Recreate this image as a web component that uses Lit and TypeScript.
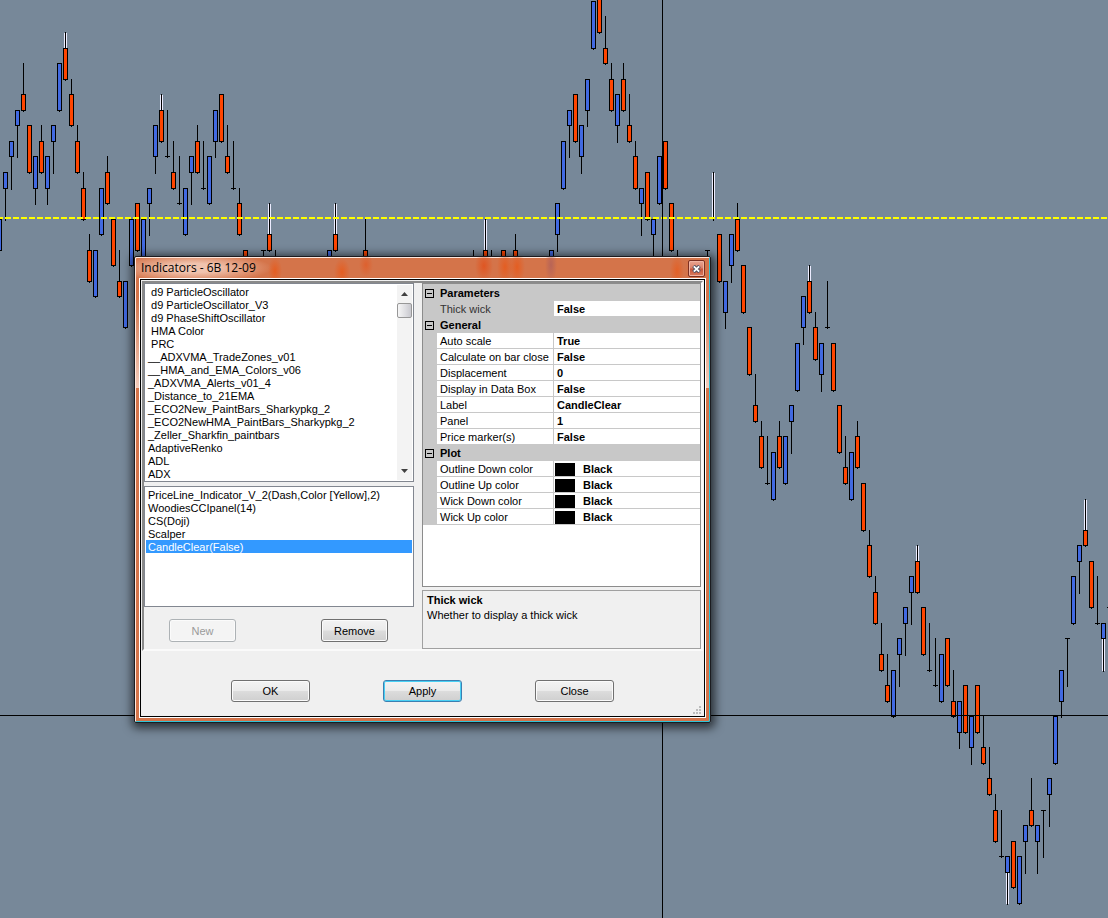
import { LitElement, html, svg, css } from "lit";
import { customElement, state } from "lit/decorators.js";
import { classMap } from "lit/directives/class-map.js";

type Bar = {
  slot: number;
  kind: "up" | "down" | "doji" | "wick";
  high: number;
  top: number;
  bottom: number;
  low: number;
  clear?: "high" | "low";
};

/* slot kind high top bottom low [h|l = highlighted wick]; prices are ticks from the price line */
const SERIES = `
-1 u 0 0 -2 -2|0 u 3 3 2 0|1 u 5 5 4 2|2 u 7 7 6 4|3 d 10 8 7 7|4 d 6 6 3 3|5 u 4 4 2 1|6 d 6 5 3 3|7 u 4 4 2 1
8 u 6 6 5 3|9 u 10 10 7 7|10 d 12 11 9 9 h|11 d 9 8 6 6|12 d 6 5 3 3|13 d 3 2 0 0|14 d -1 -2 -4 -4|15 u -2 -2 -5 -5
16 u 2 2 -1 -1|17 d 4 3 1 1|18 d 0 0 -3 -3|19 d -2 -4 -5 -5|20 u -4 -4 -7 -7|21 u 0 0 -3 -3|22 d 1 1 -2 -2
23 u 0 0 -3 -3|24 u 2 2 1 -1|25 u 6 6 4 3|26 d 8 7 5 5 h|27 x 7 4 4 4|28 d 5 3 2 2|29 x 4 1 1 1|30 u 2 2 -1 -1
31 u 4 4 3 1|32 d 6 5 3 3|33 x 5 2 2 2|34 u 4 4 1 1|35 u 7 7 5 4|36 d 8 8 5 5|37 d 6 4 3 3|38 x 5 2 2 2|39 d 2 1 -1 -1
40 d -2 -2 -3 -3|43 x -2 -2 -2 -3|44 d 1 -1 -2 -2 h|45 w -2 -2 -3 -3|54 u -2 -2 -3 -3|55 d 1 -1 -2 -2 h|60 d 0 -2 -3 -3
78 w -2 -2 -3 -3|80 d 0 -2 -3 -3 h|81 w -2 -2 -3 -3|83 d -2 -2 -3 -3|85 d -1 -2 -3 -3|91 u -2 -2 -3 -3|92 u 1 1 -1 -2
93 u 5 5 2 2|94 u 7 7 6 4|95 d 8 8 5 5|96 u 6 6 4 3|97 u 9 9 7 6|98 u 14 14 11 11|99 d 15 15 12 12|100 d 13 11 10 10
101 d 10 9 7 7|102 u 8 8 6 5|103 d 10 9 7 7|104 d 8 6 5 5|105 d 5 4 2 2|106 u 2 2 1 -1|107 d 3 3 0 0|108 u 0 0 -1 -3
109 u 4 4 1 1|110 d 5 5 2 2|111 d 1 1 -2 -2|112 w -2 -2 -3 -3|117 x -2 -2 -2 -3|118 w 3 3 0 0 h|119 d -1 -1 -4 -4
120 u -4 -4 -6 -7|121 u -1 -1 -3 -4|122 d 1 0 -2 -2|123 d -3 -3 -6 -6|124 d -7 -7 -10 -10|125 d -10 -12 -13 -13
126 d -13 -14 -16 -16|127 x -14 -17 -17 -17|128 u -15 -15 -18 -18|129 d -13 -14 -16 -16|130 u -14 -14 -17 -17
131 u -12 -12 -13 -15|132 u -8 -8 -11 -11|133 u -5 -5 -7 -8|134 d -3 -4 -6 -6 h|135 d -6 -7 -9 -9|136 u -8 -8 -10 -11
137 x -4 -7 -7 -7|138 d -8 -8 -11 -11|139 d -12 -12 -15 -15|140 d -14 -16 -17 -17|141 u -15 -15 -18 -18
142 d -13 -14 -16 -16|143 d -17 -17 -20 -20|144 d -20 -21 -23 -23|145 d -23 -24 -26 -26|146 d -26 -28 -29 -29
147 d -28 -30 -31 -31|148 u -29 -29 -32 -32|149 u -27 -27 -28 -30|150 u -25 -25 -26 -28|151 u -23 -23 -24 -26
152 d -21 -22 -24 -24 h|153 d -25 -25 -28 -28|154 x -26 -29 -29 -29|155 x -27 -30 -30 -30|156 u -28 -28 -31 -31
157 d -27 -27 -30 -30|158 d -29 -31 -32 -32|159 u -31 -31 -33 -34|160 d -30 -30 -33 -33|161 u -32 -32 -34 -35
162 d -30 -30 -33 -33|163 d -32 -34 -35 -35|164 d -34 -36 -37 -37|165 d -37 -38 -40 -40|166 x -38 -41 -41 -41
167 u -41 -41 -42 -44 l|168 d -40 -40 -43 -43|169 u -41 -41 -44 -44|170 u -39 -39 -40 -42|171 d -36 -38 -39 -39
172 u -39 -39 -40 -42|173 x -38 -38 -38 -41|174 u -36 -36 -37 -39|175 u -32 -32 -35 -35|176 u -29 -29 -31 -32
177 x -27 -27 -27 -30|178 u -23 -23 -26 -26|179 u -21 -21 -22 -24|180 d -18 -20 -21 -21 h|181 d -22 -22 -25 -25
182 x -23 -26 -26 -26|183 u -26 -26 -27 -29 l|184 x -25 -25 -25 -25`;

const KINDS: Record<string, Bar["kind"]> = { u: "up", d: "down", x: "doji", w: "wick" };

const BARS: Bar[] = SERIES.trim()
  .split(/[|\n]/)
  .map((row) => {
    const [slot, kind, high, top, bottom, low, mark] = row.trim().split(" ");
    return {
      slot: Number(slot),
      kind: KINDS[kind],
      high: Number(high),
      top: Number(top),
      bottom: Number(bottom),
      low: Number(low),
      clear: mark === "h" ? "high" : mark === "l" ? "low" : undefined,
    };
  });

const TICK = 15.55;
const yOf = (price: number) => Math.round(218.6 - TICK * price);

@customElement("price-chart")
export class PriceChart extends LitElement {
  static styles = css`
    :host { display: block; background: #778899; }
    .plot { display: block; width: 100%; height: 100%; shape-rendering: crispEdges; }
    .ink { fill: #000; }
    .glow { fill: #ececff; }
    .up { fill: #4169e1; }
    .down { fill: #ff4500; }
    .price { stroke: #ffff00; stroke-width: 2; stroke-dasharray: 6 2; }
    .cross { stroke: #000; stroke-width: 1; }
  `;

  private bar(b: Bar) {
    const x = 5 + 6 * b.slot;
    const high = yOf(b.high);
    const low = yOf(b.low) + 2;
    const top = yOf(b.top);
    const bottom = yOf(b.bottom);
    const glowTop = b.clear === "high" ? high + 1 : bottom;
    const glowEnd = b.clear === "high" ? (b.kind === "wick" ? bottom : top) : low - 1;
    return svg`
      ${b.clear ? svg`<rect class="glow" x=${x - 1} y=${glowTop} width="3" height=${glowEnd - glowTop}></rect>` : null}
      <rect class="ink" x=${x} y=${high} width="1" height=${low - high}></rect>
      ${b.kind === "doji" ? svg`<rect class="ink" x=${x - 2} y=${top} width="5" height="1"></rect>` : null}
      ${b.kind === "up" || b.kind === "down"
        ? svg`<rect class="ink" x=${x - 2} y=${top} width="5" height=${bottom - top + 1}></rect>
            <rect class=${b.kind} x=${x - 1} y=${top + 1} width="3" height=${bottom - top - 1}></rect>`
        : null}`;
  }

  render() {
    return html`<svg class="plot" role="img" aria-label="Price chart">
      ${BARS.map((b) => this.bar(b))}
      <line class="price" x1="0" x2="100%" y1="218" y2="218" stroke-dashoffset="3"></line>
      <line class="cross" x1="662.5" x2="662.5" y1="0" y2="100%"></line>
      <line class="cross" x1="0" x2="100%" y1="715.5" y2="715.5"></line>
    </svg>`;
  }
}

const AVAILABLE = [
  "\u00a0d9 ParticleOscillator",
  "\u00a0d9 ParticleOscillator_V3",
  "\u00a0d9 PhaseShiftOscillator",
  "\u00a0HMA Color",
  "\u00a0PRC",
  "__ADXVMA_TradeZones_v01",
  "__HMA_and_EMA_Colors_v06",
  "_ADXVMA_Alerts_v01_4",
  "_Distance_to_21EMA",
  "_ECO2New_PaintBars_Sharkypkg_2",
  "_ECO2NewHMA_PaintBars_Sharkypkg_2",
  "_Zeller_Sharkfin_paintbars",
  "AdaptiveRenko",
  "ADL",
  "ADX",
];

const ACTIVE = [
  "PriceLine_Indicator_V_2(Dash,Color [Yellow],2)",
  "WoodiesCCIpanel(14)",
  "CS(Doji)",
  "Scalper",
  "CandleClear(False)",
];

type Prop = { name: string; value: string; swatch?: boolean };

const GROUPS: { title: string; props: Prop[] }[] = [
  { title: "Parameters", props: [{ name: "Thick wick", value: "False" }] },
  {
    title: "General",
    props: [
      { name: "Auto scale", value: "True" },
      { name: "Calculate on bar close", value: "False" },
      { name: "Displacement", value: "0" },
      { name: "Display in Data Box", value: "False" },
      { name: "Label", value: "CandleClear" },
      { name: "Panel", value: "1" },
      { name: "Price marker(s)", value: "False" },
    ],
  },
  {
    title: "Plot",
    props: [
      { name: "Outline Down color", value: "Black", swatch: true },
      { name: "Outline Up color", value: "Black", swatch: true },
      { name: "Wick Down color", value: "Black", swatch: true },
      { name: "Wick Up color", value: "Black", swatch: true },
    ],
  },
];

@customElement("property-grid")
export class PropertyGrid extends LitElement {
  static styles = css`
    :host { display: block; background: #fff; border: 1px solid #8c8c8c; box-sizing: border-box; overflow: hidden; }
    table { width: 100%; border-collapse: separate; border-spacing: 0; table-layout: fixed; border-top: 1px solid #c8c8c8; }
    .c-gutter { width: 14px; }
    .c-name { width: 117px; }
    th, td { box-sizing: border-box; height: 16px; padding: 0 0 0 3px; line-height: 15px; text-align: left; white-space: nowrap; overflow: hidden; }
    .gutter { background: #c8c8c8; padding: 0; }
    .group { background: #c8c8c8; font-weight: bold; }
    .name, .value { padding-top: 1px; }
    .name { font-weight: normal; box-shadow: inset -1px -1px 0 #c8c8c8; }
    .value { font-weight: bold; box-shadow: inset 0 -1px 0 #c8c8c8; }
    .current .name { background: #c8c8c8; color: #333; }
    .cell { display: flex; align-items: center; gap: 8px; }
    .swatched { padding: 0 0 0 1px; }
    .swatched .label { padding-top: 1px; }
    .swatch { width: 20px; height: 13px; background: #000; }
    .toggle { display: block; width: 14px; height: 15px; margin: 0; padding: 0 0 0 2px; border: 0; background: none; }
    .toggle svg { display: block; shape-rendering: crispEdges; }
  `;

  @state() private closed: string[] = [];

  private flip(title: string) {
    this.closed = this.closed.includes(title)
      ? this.closed.filter((t) => t !== title)
      : [...this.closed, title];
  }

  render() {
    return html`<table>
      <colgroup><col class="c-gutter" /><col class="c-name" /><col /></colgroup>
      ${GROUPS.map((g) => {
        const shut = this.closed.includes(g.title);
        return html`<tbody>
          <tr>
            <td class="gutter">
              <button class="toggle" aria-label=${"Toggle " + g.title} @click=${() => this.flip(g.title)}>
                <svg width="9" height="9" viewBox="0 0 9 9" fill="none" stroke="#000">
                  <path d=${shut ? "M.5 .5H8.5V8.5H.5ZM2 4.5H7M4.5 2V7" : "M.5 .5H8.5V8.5H.5ZM2 4.5H7"} />
                </svg>
              </button>
            </td>
            <th class="group" colspan="2" scope="colgroup">${g.title}</th>
          </tr>
          ${shut
            ? null
            : g.props.map(
                (p) => html`<tr class=${classMap({ current: p.name === "Thick wick" })}>
                  <td class="gutter"></td>
                  <th class="name" scope="row">${p.name}</th>
                  <td class=${classMap({ value: true, swatched: !!p.swatch })}>
                    <div class="cell">${p.swatch ? html`<span class="swatch"></span>` : null}<span class="label">${p.value}</span></div>
                  </td>
                </tr>`
              )}
        </tbody>`;
      })}
    </table>`;
  }
}

@customElement("indicators-dialog")
export class IndicatorsDialog extends LitElement {
  static styles = css`
    :host {
      display: flex; flex-direction: column; box-sizing: border-box; width: 577px;
      padding: 0 4px 4px; border: 1px solid #1c1c20; border-radius: 2px;
      color: #000; font: 11px "Liberation Sans", Arial, sans-serif;
      background:
        linear-gradient(#d4744a 0, #d4744a 40px, #f3cdbd 131px, #d4744a 131px);
      box-shadow: inset 1px 1px 0 #ffe9df, inset -1px -1px 0 #2fc4d8, 1px 2px 10px 3px rgba(0, 0, 0, 0.65);
    }
    .title { display: flex; align-items: flex-start; justify-content: space-between; height: 21px; margin: 0 -3px;
      background:
        radial-gradient(ellipse 78px 15px at 58px 11px, rgba(250, 222, 208, 0.75) 30%, rgba(250, 222, 208, 0) 100%),
        radial-gradient(ellipse 7px 14px at 139px 14px, rgba(232, 88, 24, 0.8), rgba(232, 88, 24, 0)),
        radial-gradient(ellipse 8px 14px at 206px 15px, rgba(232, 88, 24, 0.8), rgba(232, 88, 24, 0)),
        radial-gradient(ellipse 7px 12px at 230px 8px, rgba(226, 88, 34, 0.7), rgba(226, 88, 34, 0)),
        radial-gradient(ellipse 9px 16px at 348px 9px, rgba(226, 78, 24, 0.8), rgba(226, 78, 24, 0)),
        radial-gradient(ellipse 8px 18px at 369px 10px, rgba(232, 88, 24, 0.8), rgba(232, 88, 24, 0)),
        radial-gradient(ellipse 8px 18px at 381px 10px, rgba(232, 88, 24, 0.8), rgba(232, 88, 24, 0)),
        radial-gradient(ellipse 6px 18px at 415px 8px, rgba(176, 96, 90, 0.8), rgba(176, 96, 90, 0)),
        radial-gradient(ellipse 7px 16px at 541px 14px, rgba(232, 88, 24, 0.7), rgba(232, 88, 24, 0)); }
    h1 { margin: 0; padding-left: 5px; font: 12px/21px "Open Sans", "Noto Sans", sans-serif; }
    .x { display: grid; place-items: center; width: 17px; height: 17px; margin: 3px 4px 0 0; padding: 0; border: 1px solid #7c3022;
      border-radius: 2px; box-shadow: inset 0 0 0 1px #f0b3a2; background: linear-gradient(#e8a592, #dc8068 48%, #c4543a 52%, #dc7c5e); }
    .client { border: 1px solid #fff; }
    .inner { display: flex; flex-direction: column; border: 1px solid #000; padding: 1px 1px 0; background: #f0f0f0; }
    .panel { display: flex; gap: 8px; border: 2px solid; border-color: #8a8a8a #fafafa #fafafa #8a8a8a; }
    .left { display: flex; flex-direction: column; width: 270px; }
    .box { display: flex; box-sizing: border-box; border: 1px solid #828790; padding: 1px; background: #fff; }
    .all { height: 199px; }
    .used { height: 121px; margin-top: 4px; }
    select { flex: 1; min-width: 0; margin: 0; padding: 0; border: 0; border-radius: 0; outline: 0; overflow: hidden;
      background: #fff; color: #000; font: inherit; }
    option { box-sizing: border-box; height: 13px; min-height: 13px; padding: 1px 2px 0; font: 11px/13px "Liberation Sans", Arial, sans-serif; }
    .used option:checked { background: linear-gradient(#3399ff, #3399ff); color: #fff; -webkit-text-fill-color: #fff; }
    .bar { display: flex; flex-direction: column; width: 15px; background: #f3f3f3; }
    .bar button { display: grid; place-items: center; width: 15px; height: 18px; padding: 0; border: 0; background: none; }
    .bar .thumb { height: 15px; border: 1px solid #979797; border-radius: 2px; background: linear-gradient(90deg, #f6f6f6, #dcdce0 60%, #c8c8ce); }
    .room { flex: 1; }
    .pair { display: flex; justify-content: space-between; padding: 12px 26px 0 25px; }
    .btn { box-sizing: border-box; width: 79px; height: 22px; padding: 0; border: 1px solid #707070; border-radius: 3px; color: #000; font: inherit;
      box-shadow: inset 0 0 0 1px #fbfbfb; background: linear-gradient(#f3f3f3, #ebebeb 48%, #dcdcdc 52%, #cfcfcf); }
    .pair .btn { width: 67px; height: 23px; }
    .btn:disabled { border-color: #adb2b5; color: #9a9a9a; background: #f4f4f4; }
    .btn.default { border-color: #3c7fb1; box-shadow: inset 0 0 0 1px #48d0f4; }
    .right { display: flex; flex-direction: column; gap: 3px; flex: 1; min-width: 0; }
    property-grid { height: 304px; }
    .help { box-sizing: border-box; height: 59px; padding: 2px 4px; border: 1px solid #a0a0a0; line-height: 15px; }
    .help h2, .help p { margin: 0; font-size: 11px; }
    .footer { display: flex; align-items: flex-start; gap: 73px; height: 65px; box-sizing: border-box; padding: 29px 0 0 89px; }
    .grip { align-self: flex-end; margin: 0 2px 2px auto; shape-rendering: crispEdges; }
  `;

  render() {
    return html`
      <header class="title">
        <h1>Indicators - 6B 12-09</h1>
        <button class="x" aria-label="Close window">
          <svg width="9" height="8" viewBox="0 0 9 8" fill="none">
            <path d="M1.5 1L7.5 7M7.5 1L1.5 7" stroke="#4a4e60" stroke-width="3.6" />
            <path d="M1.8 1.3L7.2 6.7M7.2 1.3L1.8 6.7" stroke="#fff" stroke-width="1.8" />
          </svg>
        </button>
      </header>
      <div class="client"><div class="inner">
        <div class="panel">
          <div class="left">
            <div class="box all">
              <select size="15" aria-label="Available indicators">
                ${AVAILABLE.map((n) => html`<option>${n}</option>`)}
              </select>
              <div class="bar">
                <button aria-label="Scroll up"><svg width="7" height="4" viewBox="0 0 7 4"><path d="M3.5 0L7 4H0Z" fill="#404040" /></svg></button>
                <button class="thumb" aria-label="Scroll position"></button>
                <span class="room"></span>
                <button aria-label="Scroll down"><svg width="7" height="4" viewBox="0 0 7 4"><path d="M0 0H7L3.5 4Z" fill="#404040" /></svg></button>
              </div>
            </div>
            <div class="box used">
              <select size="9" aria-label="Active indicators">
                ${ACTIVE.map((n, i) => html`<option ?selected=${i === 4}>${n}</option>`)}
              </select>
            </div>
            <div class="pair">
              <button class="btn" disabled>New</button>
              <button class="btn">Remove</button>
            </div>
          </div>
          <div class="right">
            <property-grid></property-grid>
            <section class="help"><h2>Thick wick</h2><p>Whether to display a thick wick</p></section>
          </div>
        </div>
        <footer class="footer">
          <button class="btn">OK</button>
          <button class="btn default">Apply</button>
          <button class="btn">Close</button>
          <svg class="grip" width="8" height="8" viewBox="0 0 8 8" fill="#bcbcbc">
            <path d="M6 0h2v2h-2zM6 3h2v2h-2zM3 3h2v2h-2zM6 6h2v2h-2zM3 6h2v2h-2zM0 6h2v2h-2z" />
          </svg>
        </footer>
      </div></div>`;
  }
}

@customElement("app-root")
export class AppRoot extends LitElement {
  static styles = css`
    :host { display: grid; position: relative; height: 100vh; overflow: hidden; }
    .window { position: absolute; left: 134px; top: 256px; }
  `;

  render() {
    return html`
      <price-chart></price-chart>
      <indicators-dialog class="window" role="dialog" aria-label="Indicators"></indicators-dialog>`;
  }
}
